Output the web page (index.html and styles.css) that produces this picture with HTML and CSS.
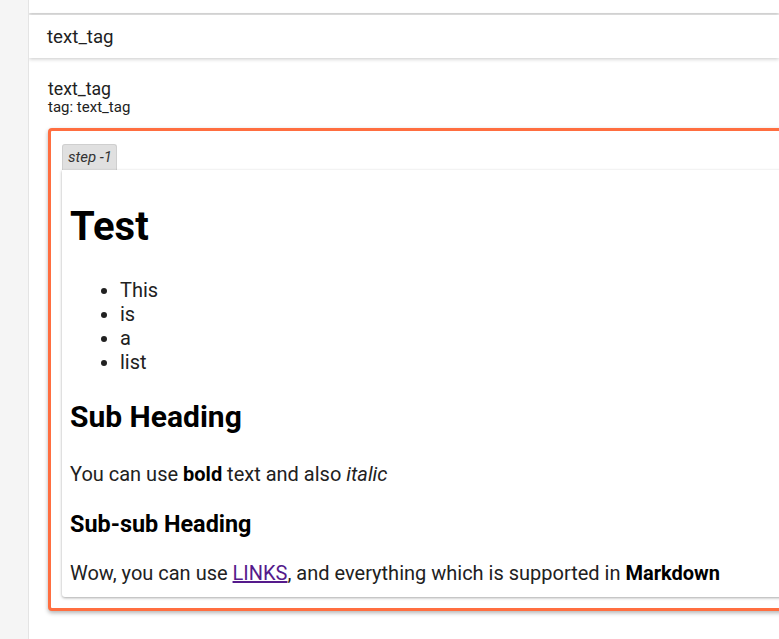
FILE: index.html
```html
<!DOCTYPE html>
<html>
<head>
<meta charset="utf-8">
<link rel="stylesheet" href="styles.css">
</head>
<body>
<div class="layout">
  <aside class="sidebar"></aside>
  <main class="main">
    <div class="top-card"></div>
    <div class="header-card">text_tag</div>
    <section class="content">
      <div class="title">text_tag</div>
      <div class="subtitle">tag: text_tag</div>
      <div class="step-box">
        <div class="tab">step -1</div>
        <div class="md-card">
          <h1>Test</h1>
          <ul>
            <li>This</li>
            <li>is</li>
            <li>a</li>
            <li>list</li>
          </ul>
          <h2>Sub Heading</h2>
          <p>You can use <strong>bold</strong> text and also <em>italic</em></p>
          <h3>Sub-sub Heading</h3>
          <p>Wow, you can use <a href="#" class="visited">LINKS</a>, and everything which is supported in <strong>Markdown</strong></p>
        </div>
      </div>
    </section>
  </main>
</div>
</body>
</html>
```

FILE: styles.css
```css
html, body {
  margin: 0;
  padding: 0;
  overflow: hidden;
  font-family: Roboto, "Noto Sans", sans-serif;
  background: #ffffff;
}
.layout {
  display: flex;
  height: 639px;
  overflow: hidden;
}
.sidebar {
  flex: 0 0 28px;
  background: #f5f5f5;
  border-right: 1px solid #e4e4e4;
}
.main {
  flex: 1 1 auto;
  min-width: 0;
  display: flex;
  flex-direction: column;
  background: #fafafa;
  overflow: hidden;
}
.top-card {
  flex: 0 0 13px;
  background: #fff;
  box-shadow: 0 1px 3px rgba(0,0,0,0.22);
}
.header-card {
  flex: 0 0 43px;
  margin-top: 2px;
  padding-left: 18px;
  display: flex;
  align-items: center;
  font-size: 18.7px;
  color: #212121;
  background: #fff;
  box-shadow: 0 1px 4px rgba(0,0,0,0.22);
  position: relative;
}
.content {
  flex: 1 1 auto;
  background: #fff;
  padding: 21px 0 0 19px;
  margin-right: -40px;
}
.title {
  font-size: 17.7px;
  line-height: 20px;
  color: #212121;
}
.subtitle {
  font-size: 15px;
  line-height: 17px;
  color: #212121;
}
.step-box {
  margin-top: 12px;
  border: 3px solid #ff6e40;
  border-radius: 4px;
  padding: 13px 11px 11px 11px;
  box-shadow: 0 2px 4px rgba(0,0,0,0.3);
  background: #fff;
}
.tab {
  width: fit-content;
  height: 26px;
  box-sizing: border-box;
  padding: 0 4px 0 5px;
  line-height: 25px;
  font-size: 15px;
  font-style: italic;
  color: #333;
  background: #e0e0e0;
  border: 1px solid #cfcfcf;
  border-bottom: none;
  border-radius: 3px 3px 0 0;
}
.md-card {
  background: #fff;
  padding: 33px 8px 12px 8px;
  box-shadow: 0 1px 3px rgba(0,0,0,0.35);
  border-radius: 0 0 3px 3px;
  font-size: 20px;
  line-height: 24px;
  color: #212121;
}
.md-card h1 {
  font-size: 40px;
  line-height: 48px;
  margin: 0 0 27px;
  color: #000;
}
.md-card ul {
  margin: 0;
  padding-left: 50px;
}
.md-card h2 {
  font-size: 30px;
  line-height: 36px;
  margin: 25px 0 27px;
  color: #000;
}
.md-card h3 {
  font-size: 23.4px;
  line-height: 28px;
  margin: 24px 0 23px;
  color: #000;
}
.md-card p {
  margin: 0;
}
.md-card strong { color: #000; }
.md-card a.visited { color: #551a8b; }
```
